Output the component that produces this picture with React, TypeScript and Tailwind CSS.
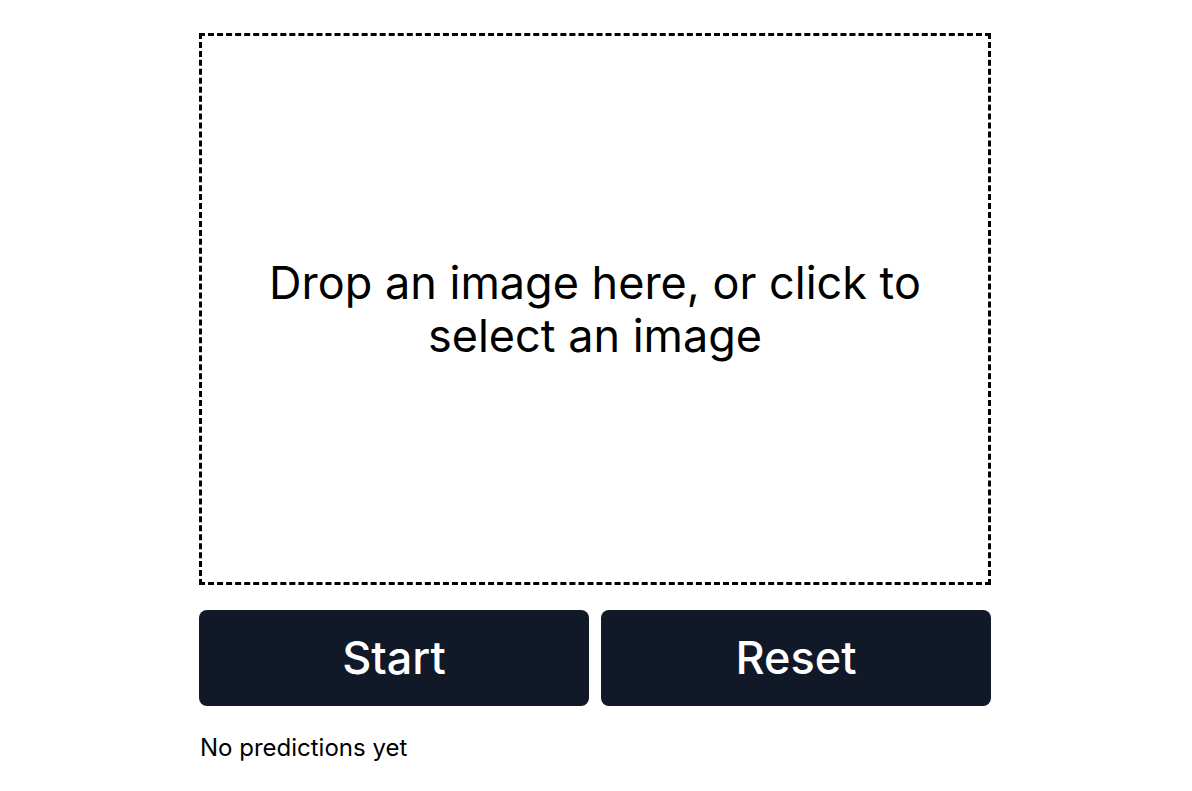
export default function App() {
  return (
    <div className="min-h-screen bg-white pl-[199px]" style={{ fontFamily: "Inter, 'Noto Sans', sans-serif" }}>
      <div className="w-[792px] pt-[33px] flex flex-col">
        <div className="h-[552px] border-[3px] border-dashed border-black flex items-center justify-center px-10 cursor-pointer">
          <p className="text-[45px] leading-[53px] text-center text-black">
            Drop an image here, or click to select an image
          </p>
        </div>
        <div className="mt-[25px] grid grid-cols-2 gap-3">
          <button className="h-[96px] rounded-lg bg-[#111827] text-white text-[45px] font-medium">Start</button>
          <button className="h-[96px] rounded-lg bg-[#111827] text-white text-[45px] font-medium">Reset</button>
        </div>
        <p className="mt-[26px] pl-px text-[24px] leading-[32px] text-black">No predictions yet</p>
      </div>
    </div>
  );
}
